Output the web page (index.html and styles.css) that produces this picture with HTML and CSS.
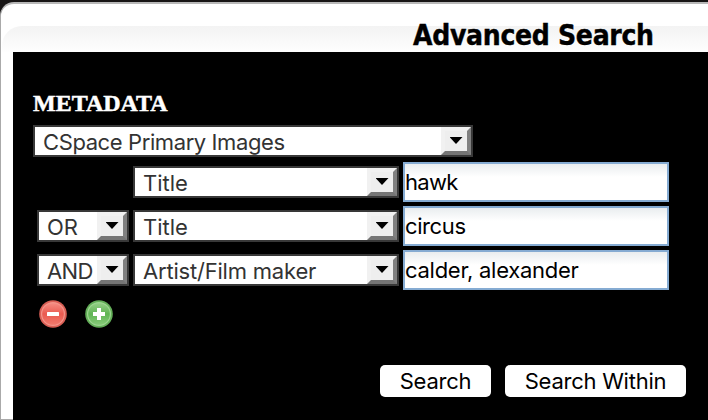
FILE: index.html
```html
<!DOCTYPE html>
<html lang="en">
<head>
<meta charset="utf-8">
<title>Advanced Search</title>
<link rel="stylesheet" href="styles.css">
</head>
<body>
<main class="dialog">
  <header class="header"><h1><span>Advanced Search</span></h1></header>
  <section class="panel">
    <h2><span>METADATA</span></h2>
    <div class="select wide"><span class="label t-space">CSpace Primary Images</span><i class="arrow"></i></div>
    <div class="rows">
      <span></span>
      <div class="select"><span class="label t-title">Title</span><i class="arrow"></i></div>
      <div class="field"><span class="t-hawk">hawk</span></div>
      <div class="select"><span class="label t-or">OR</span><i class="arrow"></i></div>
      <div class="select"><span class="label t-title">Title</span><i class="arrow"></i></div>
      <div class="field"><span class="t-circus">circus</span></div>
      <div class="select"><span class="label t-and">AND</span><i class="arrow"></i></div>
      <div class="select"><span class="label t-artist">Artist/Film maker</span><i class="arrow"></i></div>
      <div class="field"><span class="t-calder">calder, alexander</span></div>
    </div>
    <div class="icons">
      <svg width="30" height="30" viewBox="0 0 30 30">
        <defs>
          <linearGradient id="red" x1="0" y1="0" x2="0" y2="1"><stop offset="0" stop-color="#f58c82"/><stop offset=".5" stop-color="#ea5a50"/><stop offset="1" stop-color="#f0796c"/></linearGradient>
          <linearGradient id="green" x1="0" y1="0" x2="0" y2="1"><stop offset="0" stop-color="#93cf86"/><stop offset=".5" stop-color="#60b454"/><stop offset="1" stop-color="#86cb78"/></linearGradient>
        </defs>
        <circle cx="15" cy="15" r="13.8" fill="#d95f55"/><circle cx="15" cy="15" r="12" fill="#f4948a"/><circle cx="15" cy="15" r="10.8" fill="url(#red)"/>
        <rect x="9" y="13" width="12" height="4" rx=".6" fill="#fff"/>
      </svg>
      <svg width="30" height="30" viewBox="0 0 30 30">
        <circle cx="15" cy="15" r="13.8" fill="#62ad57"/><circle cx="15" cy="15" r="12" fill="#9dd691"/><circle cx="15" cy="15" r="10.8" fill="url(#green)"/>
        <path d="M13 9h4v4h4v4h-4v4h-4v-4h-4v-4h4z" fill="#fff"/>
      </svg>
    </div>
    <div class="buttons">
      <button class="search"><span>Search</span></button>
      <button class="within"><span>Search Within</span></button>
    </div>
  </section>
</main>
</body>
</html>
```
FILE: styles.css
```css
* { box-sizing: border-box; }
body {
  margin: 0;
  height: 420px;
  padding-top: 2px;
  overflow: hidden;
  background: #171515;
  font-family: Inter, "Liberation Sans", sans-serif;
}
.dialog {
  width: 728px;
  height: 418px;
  background: #fff;
  border: 1px solid #aaa;
  border-top: 2px solid #b8b8b8;
  border-radius: 14px 0 0 0;
  padding: 22px 0 0 1px;
}
.header {
  height: 26px;
  border-radius: 20px 0 0 0;
  background: linear-gradient(#f3f3f3, #fefefe);
}
h1 {
  margin: 0;
  padding-left: 411px;
  font: bold 28px/34px "DejaVu Sans Condensed", "DejaVu Sans", sans-serif;
  font-stretch: condensed;
  letter-spacing: -0.3px;
  height: 26px;
  color: #000;
  -webkit-text-stroke: 0.4px #000;
}
h1 span { display: block; transform: translateY(-7px); white-space: nowrap; }
.panel {
  margin-left: 11px;
  height: 368px;
  padding: 39px 0 0 20px;
  background: #000;
}
h2 {
  margin: 0;
  height: 34px;
  font: bold 24px/24px "Liberation Serif", serif;
  color: #fff;
  -webkit-text-stroke: 0.5px #fff;
}
.select {
  display: flex;
  justify-content: space-between;
  height: 32px;
  border: 2px solid #383838;
  background: #fff;
  color: #333;
  font-size: 22px;
  line-height: 30px;
  white-space: nowrap;
}
.wide { width: 440px; }
.label { width: 0; padding-left: 8px; }
.t-space { letter-spacing: -0.4px; }
.t-and { letter-spacing: -0.6px; }
.t-artist { letter-spacing: -0.2px; }
.t-hawk { letter-spacing: -0.7px; }
.t-circus { letter-spacing: -0.4px; }
.t-calder { letter-spacing: -0.27px; }
.arrow {
  display: flex;
  justify-content: center;
  flex: none;
  width: 30px;
  height: 28px;
  border-right: 4px solid #808080;
  border-bottom: 4px solid #757575;
  border-left: 4px solid #f1f1f1;
  border-top: 4px solid #f1f1f1;
  background: #eee;
}
.arrow::before {
  content: "";
  width: 13px;
  height: 7px;
  margin-top: 6px;
  background: #000;
  clip-path: polygon(0 0, 100% 0, 50% 100%);
}
.rows {
  display: grid;
  grid-template-columns: 92px 266px 266px;
  grid-auto-rows: 40px;
  gap: 4px;
  align-items: center;
  margin: 5px 0 0 4px;
}
.field {
  height: 40px;
  border: 2px solid #85abd2;
  background: linear-gradient(#e9edef, #fff 13px);
  color: #000;
  font-size: 22px;
  line-height: 37px;
  white-space: nowrap;
}
.icons { display: flex; gap: 16px; margin: 9px 0 0 5px; }
.icons svg { display: block; }
.buttons { display: flex; gap: 14px; margin: 36px 0 0 347px; }
button {
  height: 32px;
  border: 0;
  border-radius: 5px;
  padding: 0;
  background: #fff;
  color: #000;
  font: 22px/32px Inter, "Liberation Sans", sans-serif;
  letter-spacing: -0.25px;
  white-space: nowrap;
}
.search { width: 111px; }
.within { width: 181px; }
```
